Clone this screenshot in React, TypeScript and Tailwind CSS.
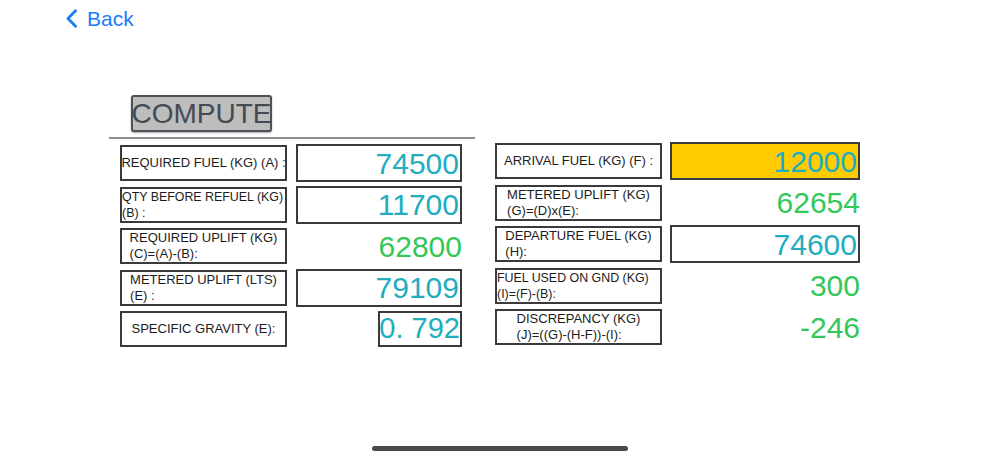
import React from "react";

type Row = {
  label: string[];
  value: string;
  kind: "input" | "output" | "small" | "yellow";
  align?: "center" | "left";
  tight?: boolean;
};

const leftRows: Row[] = [
  { label: ["REQUIRED FUEL (KG) (A) :"], value: "74500", kind: "input" },
  { label: ["QTY BEFORE REFUEL (KG)", "(B) :"], value: "11700", kind: "input", align: "left", tight: true },
  { label: ["REQUIRED UPLIFT (KG)", "(C)=(A)-(B):"], value: "62800", kind: "output" },
  { label: ["METERED UPLIFT (LTS)", "(E) :"], value: "79109", kind: "input" },
  { label: ["SPECIFIC GRAVITY (E):"], value: "0. 792", kind: "small" },
];

const rightRows: Row[] = [
  { label: ["ARRIVAL FUEL (KG) (F) :"], value: "12000", kind: "yellow" },
  { label: ["METERED UPLIFT (KG)", "(G)=(D)x(E):"], value: "62654", kind: "output" },
  { label: ["DEPARTURE FUEL (KG)", "(H):"], value: "74600", kind: "input" },
  { label: ["FUEL USED ON GND (KG)", "(I)=(F)-(B):"], value: "300", kind: "output", align: "left", tight: true },
  { label: ["DISCREPANCY (KG)", "(J)=((G)-(H-F))-(I):"], value: "-246", kind: "output" },
];

function Label({ row }: { row: Row }) {
  return (
    <div
      className={`flex h-[36px] w-[167px] shrink-0 items-center overflow-hidden border-2 border-[#3a3a3a] leading-[16px] text-[#1c1c1c] ${
        row.tight ? "text-[12.4px]" : "text-[13px]"
      } ${row.align === "left" ? "justify-start" : "justify-center"}`}
    >
      <span className="whitespace-nowrap text-left">
        {row.label.map((line, i) => (
          <span key={i} className="block">
            {line}
          </span>
        ))}
      </span>
    </div>
  );
}

function Value({ row, width }: { row: Row; width: string }) {
  if (row.kind === "output") {
    return (
      <div className={`flex h-[38px] ${width} items-center justify-end whitespace-nowrap text-[30px] text-[#34c759]`}>
        {row.value}
      </div>
    );
  }
  if (row.kind === "small") {
    return (
      <div className={`flex h-[38px] ${width} items-center justify-end`}>
        <div className="flex h-[36px] w-[84px] items-center justify-end overflow-hidden whitespace-nowrap border-2 border-[#3a3a3a] text-[29px] text-[#22adbf]">
          {row.value}
        </div>
      </div>
    );
  }
  return (
    <div
      className={`flex h-[38px] ${width} items-center justify-end whitespace-nowrap border-2 border-[#3a3a3a] pr-[1px] text-[30px] text-[#22adbf] ${
        row.kind === "yellow" ? "bg-[#ffcc00]" : "bg-white"
      }`}
    >
      {row.value}
    </div>
  );
}

export default function App() {
  return (
    <main className="relative h-[462px] w-[1000px] overflow-hidden bg-white font-['Liberation_Sans',Arial,sans-serif]">
      <header className="flex h-[36px] items-center gap-[9px] pl-[65px] pt-[1px]">
        <svg width="13" height="19" viewBox="0 0 13 19" aria-hidden>
          <path d="M10.5 1.8 L3 9.5 L10.5 17.2" fill="none" stroke="#1a7cf7" strokeWidth="2.8" strokeLinecap="round" strokeLinejoin="round" />
        </svg>
        <span className="text-[21px] text-[#1a7cf7]">Back</span>
      </header>

      <div className="ml-[131px] mt-[59px] flex h-[37px] w-[141px] items-center justify-center rounded-[3px] border-2 border-[#4d525a] bg-[#bdbdbd] text-[28px] leading-none text-[#454a52] shadow-[0_1px_2px_rgba(0,0,0,0.35)]">
        COMPUTE
      </div>

      <div className="ml-[109px] mt-[5px] h-[2px] w-[366px] bg-[#8e8e8e]" />

      <div className="ml-[120px] flex items-start">
        <div className="mt-[5px] flex w-[342px] flex-col gap-[3.5px]">
          {leftRows.map((row) => (
            <div key={row.value} className="flex h-[38px] items-center">
              <Label row={row} />
              <div className="ml-[9px]">
                <Value row={row} width="w-[166px]" />
              </div>
            </div>
          ))}
        </div>
        <div className="ml-[33px] mt-[3px] flex flex-col gap-[3.5px]">
          {rightRows.map((row) => (
            <div key={row.value} className="flex h-[38px] items-center">
              <Label row={row} />
              <div className="ml-[8px]">
                <Value row={row} width="w-[190px]" />
              </div>
            </div>
          ))}
        </div>
      </div>

      <div className="absolute left-[372px] top-[446px] h-[5px] w-[256px] rounded-full bg-[#4a4a4a]" />
    </main>
  );
}
